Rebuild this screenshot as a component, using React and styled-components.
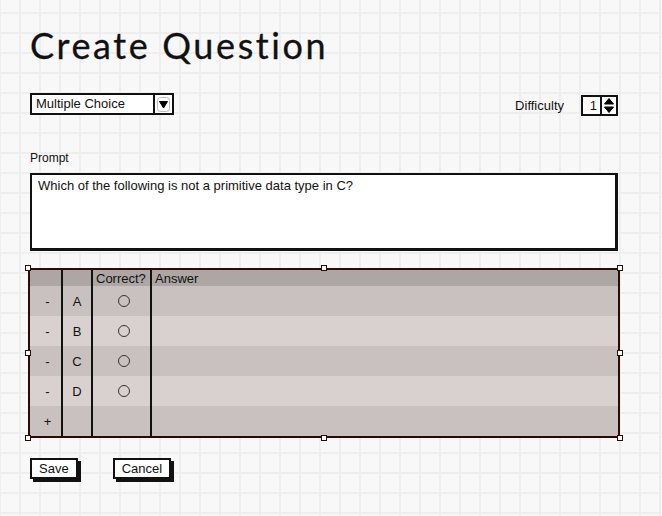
import styled, { createGlobalStyle } from "styled-components";

const GlobalStyle = createGlobalStyle`
  html, body {
    margin: 0;
    height: 100%;
  }
  body {
    background-color: #f8f8f8;
    background-image:
      linear-gradient(to right, #eeeeee 2px, transparent 2px),
      linear-gradient(to bottom, #eeeeee 2px, transparent 2px);
    background-size: 20px 20px;
    background-position: -1px 12px;
    font-family: "Liberation Sans", Arial, sans-serif;
    color: #111;
  }
`;

const rows = [
  { mark: "-", letter: "A", radio: true },
  { mark: "-", letter: "B", radio: true },
  { mark: "-", letter: "C", radio: true },
  { mark: "-", letter: "D", radio: true },
  { mark: "+", letter: "", radio: false },
];

const App = () => {
  return (
    <Page>
      <GlobalStyle />
      <Title>Create Question</Title>

      <TopRow>
        <Select>
          <span className='value'>Multiple Choice</span>
          <span className='arrow'>
            <svg width='13' height='15' viewBox='0 0 13 15'>
              <rect x='0.5' y='0.5' width='12' height='14' rx='3' fill='#fff' stroke='#bbb' />
              <path d='M2.5 4.5 L10.5 4.5 L6.5 11 Z' fill='#000' stroke='#000' strokeLinejoin='round' />
            </svg>
          </span>
        </Select>
        <Difficulty>
          <span>Difficulty</span>
          <Spinner>
            <span className='value'>1</span>
            <span className='arrows'>
              <svg width='12' height='17' viewBox='0 0 12 17'>
                <path d='M1.5 7 L6 1.5 L10.5 7 Z' fill='#000' stroke='#000' strokeLinejoin='round' />
                <path d='M1.5 10 L10.5 10 L6 15.5 Z' fill='#000' stroke='#000' strokeLinejoin='round' />
              </svg>
            </span>
          </Spinner>
        </Difficulty>
      </TopRow>

      <Label>Prompt</Label>
      <PromptBox>Which of the following is not a primitive data type in C?</PromptBox>

      <TableWrap>
        <Table>
          <Row $header>
            <Cell />
            <Cell />
            <Cell $left>Correct?</Cell>
            <Cell $left>Answer</Cell>
          </Row>
          {rows.map((row, i) => (
            <Row key={i} $light={i % 2 === 1}>
              <Cell $shift>{row.mark}</Cell>
              <Cell>{row.letter}</Cell>
              <Cell $shift>{row.radio && <Radio />}</Cell>
              <Cell />
            </Row>
          ))}
        </Table>
        <Handle $x='0%' $y='0%' />
        <Handle $x='50%' $y='0%' />
        <Handle $x='100%' $y='0%' />
        <Handle $x='0%' $y='50%' />
        <Handle $x='100%' $y='50%' />
        <Handle $x='0%' $y='100%' />
        <Handle $x='50%' $y='100%' />
        <Handle $x='100%' $y='100%' />
      </TableWrap>

      <Buttons>
        <Button>Save</Button>
        <Button>Cancel</Button>
      </Buttons>
    </Page>
  );
};

export default App;

const Page = styled.div`
  width: 662px;
  min-height: 516px;
  box-sizing: border-box;
  padding: 24px 44px 0 30px;
`;

const Title = styled.h1`
  margin: 0;
  font-family: Lato, "DejaVu Sans", sans-serif;
  font-weight: 400;
  font-size: 36px;
  line-height: 42px;
  letter-spacing: 2.6px;
  color: #111;
  -webkit-text-stroke: 0.3px #111;
`;

const TopRow = styled.div`
  margin-top: 27px;
  display: flex;
  justify-content: space-between;
  align-items: flex-start;
`;

const Select = styled.div`
  width: 144px;
  height: 22px;
  box-sizing: border-box;
  border: 2px solid #111;
  background: #fff;
  display: flex;
  font-size: 13px;
  .value {
    flex: 1;
    padding-left: 4px;
    line-height: 17px;
  }
  .arrow {
    width: 17px;
    border-left: 2px solid #111;
    display: flex;
    align-items: center;
    justify-content: center;
  }
`;

const Difficulty = styled.div`
  display: flex;
  align-items: center;
  gap: 17px;
  margin-top: 2px;
  font-size: 13px;
`;

const Spinner = styled.div`
  width: 37px;
  height: 21px;
  box-sizing: border-box;
  border: 2px solid #111;
  background: #fff;
  display: flex;
  font-size: 13px;
  .value {
    flex: 1;
    text-align: right;
    padding-right: 3px;
    line-height: 17px;
  }
  .arrows {
    width: 14px;
    border-left: 2px solid #111;
    display: flex;
    align-items: center;
    justify-content: center;
  }
`;

const Label = styled.div`
  margin-top: 35px;
  font-size: 12px;
  line-height: 14px;
`;

const PromptBox = styled.div`
  margin-top: 8px;
  height: 78px;
  box-sizing: border-box;
  border: 2px solid #111;
  border-right-width: 3px;
  border-bottom-width: 3px;
  background: #fff;
  padding: 3px 6px;
  font-size: 13px;
  line-height: 15px;
`;

const TableWrap = styled.div`
  position: relative;
  margin: 17px -2px 0;
`;

const Table = styled.div`
  border: 2px solid #2a0c04;
  display: flex;
  flex-direction: column;
`;

const Row = styled.div`
  display: grid;
  grid-template-columns: 33px 30px 59px 1fr;
  height: ${(p) => (p.$header ? "16px" : "30px")};
  background: ${(p) =>
    p.$header ? "#aea6a4" : p.$light ? "#d9d1cf" : "#c9c1bf"};
  font-size: 13px;
  color: #111;
`;

const Cell = styled.div`
  border-right: 2px solid #111;
  display: flex;
  align-items: center;
  justify-content: ${(p) => (p.$left ? "flex-start" : "center")};
  padding-left: ${(p) => (p.$left ? "3px" : p.$shift ? "4px" : "0")};
  &:last-child {
    border-right: none;
  }
`;

const Radio = styled.span`
  width: 10px;
  height: 10px;
  border: 1px solid #333;
  border-radius: 50%;
`;

const Handle = styled.span`
  position: absolute;
  left: ${(p) => p.$x};
  top: ${(p) => p.$y};
  width: 4px;
  height: 4px;
  margin: -3px 0 0 -3px;
  background: #fff;
  border: 1px solid #2a0c04;
`;

const Buttons = styled.div`
  margin-top: 20px;
  display: flex;
  gap: 35px;
`;

const Button = styled.button`
  height: 21px;
  padding: 0 7px;
  border: 2px solid #111;
  background: #fff;
  box-shadow: 3px 3px 0 #111;
  font-family: "Liberation Sans", Arial, sans-serif;
  font-size: 13px;
  color: #111;
  line-height: 17px;
`;
